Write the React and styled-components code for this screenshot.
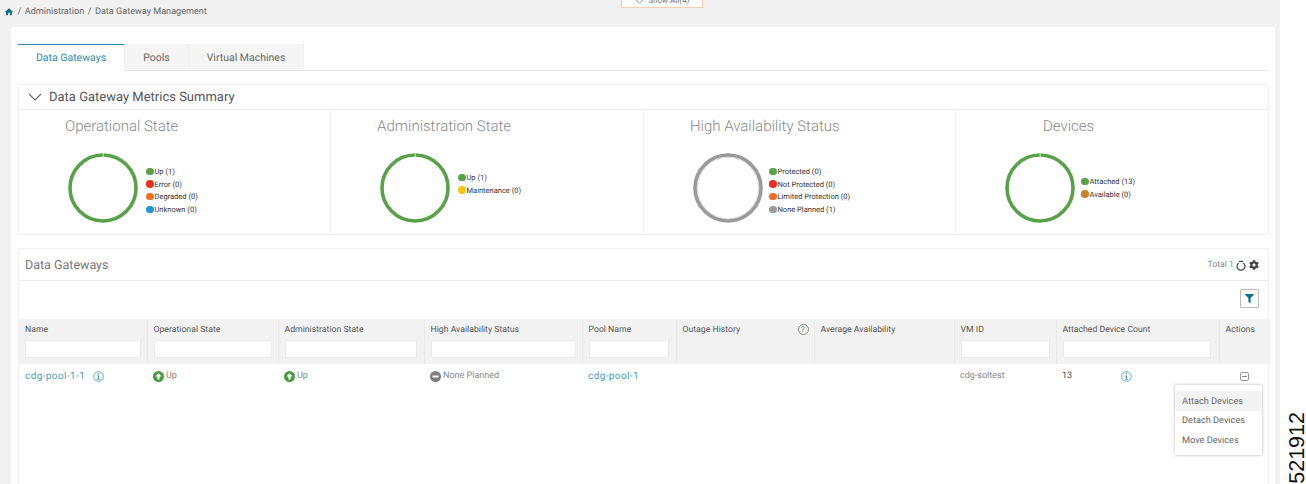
import styled, { createGlobalStyle } from "styled-components";
import { FaCog, FaFilter } from "react-icons/fa";
import { MdHome } from "react-icons/md";

const summaries = [
  {
    title: "Operational State",
    ring: "#58a14a",
    legendTop: 12,
    legend: [
      ["#58a14a", "Up (1)"],
      ["#e9301c", "Error (0)"],
      ["#ee6f24", "Degraded (0)"],
      ["#1f96cf", "Unknown (0)"],
    ],
  },
  {
    title: "Administration State",
    ring: "#58a14a",
    legendTop: 18,
    legend: [
      ["#58a14a", "Up (1)"],
      ["#fcc419", "Maintenance (0)"],
    ],
  },
  {
    title: "High Availability Status",
    ring: "#9a9a9a",
    ringInner: "#e2e2e2",
    legendTop: 12,
    legendGap: -2,
    legend: [
      ["#58a14a", "Protected (0)"],
      ["#e9301c", "Not Protected (0)"],
      ["#ee6f24", "Limited Protection (0)"],
      ["#9a9a9a", "None Planned (1)"],
    ],
  },
  {
    title: "Devices",
    ring: "#58a14a",
    titleLeft: 87,
    legendTop: 22,
    legendGap: -2,
    legend: [
      ["#58a14a", "Attached (13)"],
      ["#c8842c", "Available (0)"],
    ],
  },
];

const columns = [
  { name: "Name", width: 128, filter: 116 },
  { name: "Operational State", width: 131, filter: 118 },
  { name: "Administration State", width: 146, filter: 132 },
  { name: "High Availability Status", width: 158, filter: 145 },
  { name: "Pool Name", width: 94, filter: 80 },
  { name: "Outage History", width: 138, help: true },
  { name: "Average Availability", width: 140 },
  { name: "VM ID", width: 102, filter: 89 },
  { name: "Attached Device Count", width: 163, filter: 148 },
  { name: "Actions", width: 51 },
];

const Donut = ({ color, inner }) => (
  <svg width="70" height="70" viewBox="0 0 70 70">
    {inner && <circle cx="35" cy="35" r="30.6" fill="none" stroke={inner} strokeWidth="1.4" />}
    <circle
      cx="35"
      cy="35"
      r="33"
      fill="none"
      stroke={color}
      strokeWidth="3.6"
      strokeDasharray={inner ? "none" : "206.3 1"}
      strokeDashoffset="-0.5"
      transform="rotate(-90 35 35)"
    />
  </svg>
);

const StatusIcon = ({ color, minus }) => (
  <svg width="11" height="11" viewBox="0 0 11 11">
    <circle cx="5.5" cy="5.5" r="5.5" fill={color} />
    {minus ? (
      <rect x="2.5" y="4.5" width="6" height="2" fill="#fff" />
    ) : (
      <path d="M5.5 2.2 8.6 5.6H6.6V8.6H4.4V5.6H2.4Z" fill="#fff" />
    )}
  </svg>
);

const InfoIcon = () => (
  <svg width="11" height="11" viewBox="0 0 11 11">
    <circle cx="5.5" cy="5.5" r="4.8" fill="none" stroke="#3f97b5" strokeWidth="0.8" />
    <rect x="4.9" y="2.1" width="1.3" height="1.3" fill="#3f97b5" />
    <path d="M4.2 4.4H6.1V7.9H7V8.7H4.1V7.9H5V5.2H4.2Z" fill="#3f97b5" />
  </svg>
);

const RefreshIcon = () => (
  <svg width="10" height="11" viewBox="0 0 10 11">
    <path
      d="M2.7 2.9A4 4 0 1 0 7.3 2.9"
      fill="none"
      stroke="#444"
      strokeWidth="1.2"
    />
    <path d="M2.9 1.4H7.1" stroke="#444" strokeWidth="1.3" />
  </svg>
);

const ChevronIcon = ({ width, height, color }) => (
  <svg width={width} height={height} viewBox="0 0 14 8">
    <polyline points="1,1 7,7 13,1" fill="none" stroke={color} strokeWidth="1.1" />
  </svg>
);

const App = () => {
  return (
    <Page>
      <GlobalStyle />
      <Main>
        <ShowAll>
          <ChevronIcon width={11} height={6} color="#777" />
          Show All(4)
        </ShowAll>
        <Breadcrumb>
          <HomeLink>
            <MdHome />
          </HomeLink>
          <span>/</span>
          <span>Administration</span>
          <span>/</span>
          <span>Data Gateway Management</span>
        </Breadcrumb>
        <Card>
          <Tabs>
            <Tab $active $width={107}>Data Gateways</Tab>
            <Tab $width={64}>Pools</Tab>
            <Tab $width={115}>Virtual Machines</Tab>
          </Tabs>
          <SummaryPanel>
            <SummaryHeader>
              <ChevronIcon width={14} height={8} color="#666" />
              Data Gateway Metrics Summary
            </SummaryHeader>
            <SummaryGrid>
              {summaries.map((summary) => (
                <SummaryCell key={summary.title}>
                  <SummaryTitle $left={summary.titleLeft}>{summary.title}</SummaryTitle>
                  <ChartRow>
                    <Donut color={summary.ring} inner={summary.ringInner} />
                    <Legend $top={summary.legendTop} $gap={summary.legendGap}>
                      {summary.legend.map(([color, label]) => (
                        <LegendItem key={label}>
                          <LegendDot $color={color} />
                          {label}
                        </LegendItem>
                      ))}
                    </Legend>
                  </ChartRow>
                </SummaryCell>
              ))}
            </SummaryGrid>
          </SummaryPanel>
          <TablePanel>
            <TableHeader>
              <TableTitle>Data Gateways</TableTitle>
              <TableMeta>
                Total 1
                <RefreshIcon />
                <FaCog />
              </TableMeta>
            </TableHeader>
            <Toolbar>
              <FilterButton>
                <FaFilter />
              </FilterButton>
            </Toolbar>
            <Table>
              <colgroup>
                {columns.map((column) => (
                  <Col key={column.name} $width={column.width} />
                ))}
              </colgroup>
              <thead>
                <tr>
                  {columns.map((column) => (
                    <Th key={column.name}>
                      <ThLabel>
                        {column.name}
                        {column.help && <HelpMark>?</HelpMark>}
                      </ThLabel>
                      {column.filter && <FilterInput $width={column.filter} />}
                    </Th>
                  ))}
                </tr>
              </thead>
              <tbody>
                <tr>
                  <Td>
                    <CellRow $gap={8}>
                      <TableLink>cdg-pool-1-1</TableLink>
                      <InfoIcon />
                    </CellRow>
                  </Td>
                  <Td>
                    <CellRow>
                      <StatusIcon color="#4c9a40" />
                      Up
                    </CellRow>
                  </Td>
                  <Td>
                    <CellRow>
                      <StatusIcon color="#4c9a40" />
                      Up
                    </CellRow>
                  </Td>
                  <Td>
                    <CellRow>
                      <StatusIcon color="#7d7d7d" minus />
                      None Planned
                    </CellRow>
                  </Td>
                  <Td>
                    <TableLink>cdg-pool-1</TableLink>
                  </Td>
                  <Td />
                  <Td />
                  <Td>cdg-soltest</Td>
                  <Td>
                    <CellRow $gap={49}>
                      <CountText>13</CountText>
                      <InfoIcon />
                    </CellRow>
                  </Td>
                  <ActionsTd>
                    <MinusBox />
                    <Menu>
                      <MenuItem $active>Attach Devices</MenuItem>
                      <MenuItem>Detach Devices</MenuItem>
                      <MenuItem>Move Devices</MenuItem>
                    </Menu>
                  </ActionsTd>
                </tr>
              </tbody>
            </Table>
          </TablePanel>
        </Card>
      </Main>
      <SideStrip>
        <FigureId>521912</FigureId>
      </SideStrip>
    </Page>
  );
};

const GlobalStyle = createGlobalStyle`
  *, *::before, *::after {
    box-sizing: border-box;
  }

  html, body {
    margin: 0;
    padding: 0;
    height: 484px;
    overflow: hidden;
    background: #fff;
    font-family: "Roboto", "Liberation Sans", sans-serif;
    text-rendering: geometricPrecision;
  }
`;

const Page = styled.div`
  display: flex;
  width: 1306px;
  height: 484px;
  overflow: hidden;
`;

const Main = styled.div`
  position: relative;
  display: flex;
  flex-direction: column;
  width: 1280px;
  background-color: #f1f1f1;
`;

const ShowAll = styled.div`
  position: absolute;
  top: -6px;
  left: 621px;
  display: flex;
  align-items: center;
  justify-content: center;
  gap: 3px;
  width: 82px;
  height: 14px;
  background-color: #fff;
  border: 1px solid #f7cfae;
  color: #777;
  font-size: 8.3px;
  font-style: italic;
`;

const Breadcrumb = styled.nav`
  display: flex;
  align-items: center;
  gap: 3.5px;
  height: 24px;
  padding-left: 4px;
  color: #666;
  font-size: 9.1px;
`;

const HomeLink = styled.span`
  display: flex;
  color: #0f6f90;
  font-size: 10px;
`;

const Card = styled.section`
  display: flex;
  flex: 1;
  flex-direction: column;
  margin: 3px 5px 0 11px;
  padding: 17px 6px 0 7px;
  background-color: #fff;
`;

const Tabs = styled.div`
  display: flex;
  flex-shrink: 0;
  height: 27px;
  border-bottom: 1px solid #e6e6e6;
`;

const Tab = styled.div`
  display: flex;
  align-items: center;
  justify-content: center;
  width: ${(props) => props.$width}px;
  height: ${(props) => (props.$active ? 27 : 26)}px;
  padding-bottom: ${(props) => (props.$active ? 2 : 0)}px;
  background-color: ${(props) => (props.$active ? "#fff" : "#f5f5f5")};
  border-top: ${(props) => (props.$active ? "1px solid #2b87a5" : "none")};
  border-right: 1px solid #f0f0f0;
  color: ${(props) => (props.$active ? "#2f8bab" : "#666")};
  font-size: 10.5px;
`;

const SummaryPanel = styled.div`
  flex-shrink: 0;
  margin-top: 13px;
  border: 1px solid #f0f0f0;
`;

const SummaryHeader = styled.div`
  display: flex;
  align-items: center;
  gap: 7px;
  height: 25px;
  padding-left: 9px;
  border-bottom: 1px solid #ececec;
  color: #555;
  font-size: 13px;
`;

const SummaryGrid = styled.div`
  display: grid;
  grid-template-columns: 312px 313px 312px 1fr;
  height: 124px;
`;

const SummaryCell = styled.div`
  border-right: 1px solid #f0f0f0;

  &:last-child {
    border-right: none;
  }
`;

const SummaryTitle = styled.div`
  height: 43px;
  padding: 7px 0 0 ${(props) => props.$left || 46}px;
  color: #888;
  font-size: 15px;
  font-weight: 300;
`;

const ChartRow = styled.div`
  display: flex;
  gap: 8px;
  padding-left: 49px;
`;

const Legend = styled.div`
  display: flex;
  flex-direction: column;
  margin-top: ${(props) => props.$top}px;
  margin-left: ${(props) => props.$gap || 0}px;
`;

const LegendItem = styled.div`
  display: flex;
  align-items: center;
  gap: 1px;
  height: 12.7px;
  color: #333;
  font-size: 7.5px;
`;

const LegendDot = styled.span`
  width: 7.5px;
  height: 7.5px;
  border-radius: 50%;
  background-color: ${(props) => props.$color};
`;

const TablePanel = styled.div`
  flex: 1;
  margin-top: 13px;
  border: 1px solid #f0f0f0;
  border-bottom: none;
`;

const TableHeader = styled.div`
  display: flex;
  align-items: center;
  justify-content: space-between;
  height: 32px;
  padding: 1px 9px 0 6px;
  border-bottom: 1px solid #ececec;
`;

const TableTitle = styled.div`
  color: #777;
  font-size: 12.5px;
`;

const TableMeta = styled.div`
  display: flex;
  align-items: center;
  gap: 2px;
  color: #888;
  font-size: 8.7px;

  & svg:last-child {
    margin-left: 1px;
    color: #444;
    font-size: 10px;
  }
`;

const Toolbar = styled.div`
  display: flex;
  justify-content: flex-end;
  align-items: flex-start;
  height: 38px;
  padding: 8px 9px 0 0;
`;

const FilterButton = styled.button`
  display: flex;
  align-items: center;
  justify-content: center;
  width: 19px;
  height: 19px;
  padding: 0;
  background-color: #fff;
  border: 1px solid #bbb;
  border-radius: 1px;
  color: #10708f;
  font-size: 9px;
`;

const Table = styled.table`
  width: 100%;
  table-layout: fixed;
  border-collapse: collapse;
`;

const Col = styled.col`
  width: ${(props) => props.$width}px;
`;

const Th = styled.th`
  height: 45px;
  padding: 0 0 0 6px;
  vertical-align: top;
  background-color: #f2f2f2;
  border-right: 1px solid #e9e9e9;
  color: #555;
  font-size: 8.7px;
  font-weight: 400;
  text-align: left;

  &:last-child {
    border-right: none;
  }
`;

const ThLabel = styled.div`
  display: flex;
  align-items: center;
  justify-content: space-between;
  height: 20px;
  padding: 1px 5px 0 0;
`;

const HelpMark = styled.span`
  display: flex;
  align-items: center;
  justify-content: center;
  width: 11px;
  height: 11px;
  border: 1px solid #888;
  border-radius: 50%;
  color: #777;
  font-size: 8px;
`;

const FilterInput = styled.input`
  display: block;
  width: ${(props) => props.$width}px;
  height: 18px;
  margin-top: 1px;
  background-color: #fff;
  border: 1px solid #eaeaea;
  outline: none;
`;

const Td = styled.td`
  height: 22px;
  padding: 2px 0 0 6px;
  color: #888;
  font-size: 9px;
`;

const ActionsTd = styled(Td)`
  position: relative;
  padding-left: 21px;
`;

const CellRow = styled.div`
  display: flex;
  align-items: center;
  gap: ${(props) => props.$gap || 2}px;
`;

const TableLink = styled.span`
  color: #4a9cb5;
  font-size: 10px;
  letter-spacing: 0.4px;
`;

const CountText = styled.span`
  color: #444;
`;

const MinusBox = styled.span`
  position: relative;
  display: block;
  width: 9px;
  height: 9px;
  border: 1px solid #999;
  border-radius: 2px;

  &::after {
    content: "";
    position: absolute;
    top: 3px;
    left: 1px;
    width: 5px;
    height: 1px;
    background-color: #888;
  }
`;

const Menu = styled.div`
  position: absolute;
  top: 21px;
  right: 8px;
  width: 87px;
  padding: 6px 0 5px;
  background-color: #fff;
  box-shadow: 0 0 3px rgba(0, 0, 0, 0.3);
`;

const MenuItem = styled.div`
  display: flex;
  align-items: center;
  height: 19.5px;
  padding: 1px 0 0 7px;
  background-color: ${(props) => (props.$active ? "#f3f3f3" : "transparent")};
  color: #666;
  font-size: 9.2px;
`;

const SideStrip = styled.aside`
  display: flex;
  flex: 1;
  align-items: flex-end;
  justify-content: flex-end;
  background-color: #fff;
`;

const FigureId = styled.div`
  writing-mode: vertical-rl;
  transform: rotate(180deg);
  color: #111;
  font-family: "Liberation Sans", sans-serif;
  font-size: 21.5px;
  line-height: 18px;
`;

export default App;
